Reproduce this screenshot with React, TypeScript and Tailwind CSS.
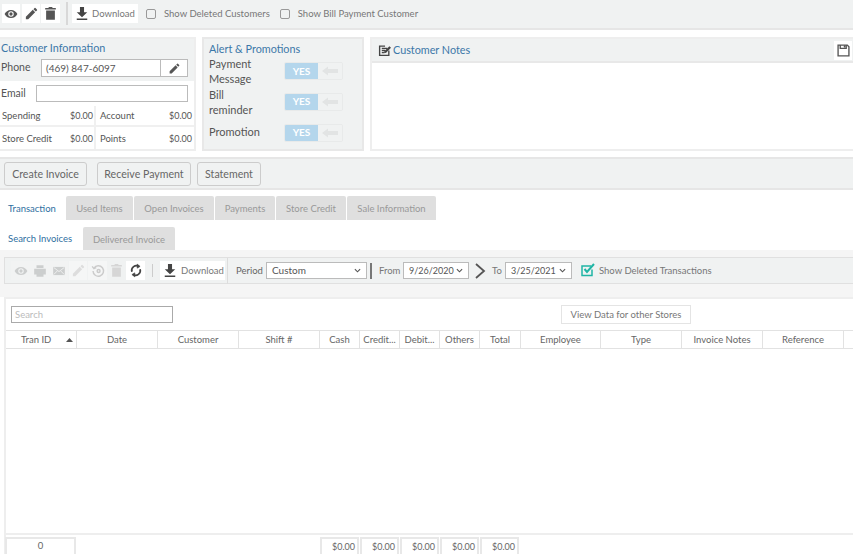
import React from "react";

const font = { fontFamily: 'Lato, "Open Sans", sans-serif' };

const Eye = ({ c = "#555" }: { c?: string }) => (
  <svg width="14" height="14" viewBox="0 0 24 24" fill={c}><path d="M12 5C7 5 2.700 8.100 1 12c1.700 3.900 6 7 11 7s9.300-3.100 11-7c-1.700-3.900-6-7-11-7zm0 11.700a4.700 4.700 0 1 1 0-9.400 4.700 4.700 0 0 1 0 9.400zm0-7.500a2.800 2.800 0 1 0 0 5.600 2.800 2.800 0 0 0 0-5.600z" /></svg>
);
const Pencil = ({ c = "#555", s = 15 }: { c?: string; s?: number }) => (
  <svg width={s} height={s} viewBox="0 0 24 24" fill={c}><path d="M3 17.250V21h3.750L17.800 9.940l-3.750-3.750L3 17.250zM20.700 7.040a1 1 0 0 0 0-1.410l-2.340-2.340a1 1 0 0 0-1.410 0l-1.830 1.830 3.750 3.750 1.830-1.830z" /></svg>
);
const Trash = ({ c = "#555" }: { c?: string }) => (
  <svg width="15" height="15" viewBox="0 0 24 24" fill={c}><path d="M5 7h14v15H5zM3.500 3H9V1.500h6V3h5.500v2.500h-17z" /></svg>
);
const Download = ({ c = "#444" }: { c?: string }) => (
  <svg width="14" height="15" viewBox="0 0 24 24" fill={c}><path d="M8.500 1h7v9h5.500l-9 8.500L3 10h5.500zM3 20.500h18V23H3z" /></svg>
);
const Arrow = () => (
  <svg width="16" height="10" viewBox="0 0 16 10" fill="#e2e4e4"><path d="M0 5l6-4.500V3h10v4H6v2.500z" /></svg>
);

const Toggle = () => (
  <div className="flex h-[18px] w-[59px] rounded-[2px] border border-[#e8eaea] overflow-hidden">
    <div className="w-[33px] bg-[#b4d6ec] text-white text-[10px] font-bold flex items-center justify-center">YES</div>
    <div className="flex-1 bg-[#f0f2f2] flex items-center justify-center"><Arrow /></div>
  </div>
);

const Stat = ({ a, b, c, d, border }: { a: string; b: string; c: string; d: string; border?: boolean }) => (
  <div className={`flex h-[22px] items-center text-[9.500px] text-[#555] ${border ? "border-b-2 border-[#f0f0f0]" : ""}`}>
    <div className="w-[96px] h-full flex items-center justify-between pl-[2px] pr-[1px] pt-[1px] border-r-2 border-[#f0f0f0]"><span>{a}</span><span className="text-[9px]">{b}</span></div>
    <div className="flex-1 flex items-center justify-between pl-[4px] pr-[2px] pt-[1px]"><span>{c}</span><span className="text-[9px]">{d}</span></div>
  </div>
);

const Tab = ({ t, w }: { t: string; w: string }) => (
  <div className={`${w} h-full bg-[#dfdfdf] rounded-t-[2px] flex items-center justify-center pt-[3px] text-[9.500px] text-[#999]`}>{t}</div>
);

const cols: [string, string][] = [
  ["Date", "w-[81px]"], ["Customer", "w-[81px]"], ["Shift #", "w-[81px]"], ["Cash", "w-[40px]"], ["Credit...", "w-[40px]"],
  ["Debit...", "w-[40px]"], ["Others", "w-[40px]"], ["Total", "w-[41px]"], ["Employee", "w-[80px]"], ["Type", "w-[81px]"],
  ["Invoice Notes", "w-[81px]"], ["Reference", "w-[81px]"],
];

const Money = ({ w }: { w: string }) => (
  <div className={`${w} h-[17px] border-2 border-b-0 border-[#e8e8e8] flex items-center justify-end pr-[2px] text-[9px] text-[#666]`}>$0.00</div>
);

const Select = ({ v, w, s }: { v: string; w: string; s: string }) => (
  <div className={`${w} ${s} h-[17px] bg-white border border-[#bbb] flex items-center justify-between pl-[5px] pr-[5px] text-[#555]`}>
    <span>{v}</span>
    <svg width="7" height="5" viewBox="0 0 8 5" fill="none" stroke="#555" strokeWidth="1.300"><path d="M1 1l3 3 3-3" /></svg>
  </div>
);

export default function App() {
  return (
    <div style={font} className="w-[853px] h-[554px] overflow-hidden bg-white text-[#555] flex flex-col">
      {/* top bar */}
      <div className="h-[30px] shrink-0 bg-[#f0f2f2] border-b-2 border-[#e6e6e6] flex items-center pl-[2px] pb-[1px]">
        <div className="w-[18px] h-[19px] bg-white flex items-center justify-center"><Eye /></div>
        <div className="w-[18px] h-[19px] bg-white ml-[2px] flex items-center justify-center"><Pencil /></div>
        <div className="w-[19px] h-[19px] bg-white ml-[1px] flex items-center justify-center"><Trash /></div>
        <div className="w-[2px] h-[23px] bg-[#d8d8d8] ml-[6px]" />
        <div className="w-[66px] h-[19px] bg-white ml-[4px] flex items-center pl-[3px] gap-[3px] text-[9.500px] text-[#777]"><Download /><span className="pt-[2px]">Download</span></div>
        <div className="w-[10px] h-[10px] rounded-[2px] border border-[#999] ml-[8px]" />
        <span className="text-[9.500px] text-[#777] ml-[8px] pt-[2px]">Show Deleted Customers</span>
        <div className="w-[10px] h-[10px] rounded-[2px] border border-[#999] ml-[10px]" />
        <span className="text-[9.500px] text-[#777] ml-[8px] pt-[2px]">Show Bill Payment Customer</span>
      </div>

      {/* panels */}
      <div className="h-[114px] shrink-0 mt-[7px] flex">
        <div className="w-[196px] h-[114px] border-2 border-l-0 border-[#eeeeee] flex flex-col">
          <div className="h-[43px] bg-[#f0f2f2] pl-[1px]">
            <div className="text-[10.800px] leading-[15px] pt-[1px] h-[17px] text-[#3b77a8]">Customer Information</div>
            <div className="flex items-center mt-[3px]">
              <span className="text-[10.500px] w-[40px]">Phone</span>
              <div className="w-[147px] h-[18px] bg-white border border-[#bbb] flex items-center text-[10px] pl-[4px]">
                <span className="flex-1">(469) 847-6097</span>
                <div className="w-[27px] h-full border-l border-[#bbb] flex items-center justify-center"><Pencil s={13} /></div>
              </div>
            </div>
          </div>
          <div className="h-[25px] flex items-center pl-[1px]">
            <span className="text-[10.500px] w-[35px]">Email</span>
            <div className="w-[152px] h-[17px] border border-[#bbb]" />
          </div>
          <Stat a="Spending" b="$0.00" c="Account" d="$0.00" border />
          <Stat a="Store Credit" b="$0.00" c="Points" d="$0.00" />
        </div>

        <div className="w-[162px] h-[114px] ml-[6px] bg-[#f0f2f2] border-2 border-[#e8e8e8] pl-[5px] pt-[2px] relative">
          <div className="text-[10.800px] leading-[16px] text-[#3b77a8]">Alert &amp; Promotions</div>
          <div className="flex items-center h-[30px] mt-[-1px]">
            <div className="w-[75px] text-[11px] leading-[15px]">Payment<br />Message</div><Toggle />
          </div>
          <div className="flex items-center h-[31px]">
            <div className="w-[75px] text-[11px] leading-[15px]">Bill<br />reminder</div><Toggle />
          </div>
          <div className="flex items-center h-[31px]">
            <div className="w-[75px] text-[11px]">Promotion</div><Toggle />
          </div>
        </div>

        <div className="flex-1 ml-[6px] h-[114px] border-2 border-r-0 border-[#eeeeee]">
          <div className="h-[24px] bg-[#f0f2f2] border-b-2 border-[#e8e8e8] flex items-center pl-[6px]">
            <svg width="13" height="13" viewBox="0 0 24 24" fill="none"><path d="M20 12v9H3V4h10" stroke="#444" strokeWidth="2.500" /><path d="M7 8h10M7 12h6M7 16h4" stroke="#444" strokeWidth="2.500" /><path d="M11 17l1-4L21 4l3 3-9 9z" fill="#444" /></svg>
            <span className="text-[10.800px] text-[#3b77a8] ml-[2px] flex-1">Customer Notes</span>
            <div className="w-[18px] h-[19px] bg-white flex items-center justify-center mr-[1px]">
              <svg width="13" height="13" viewBox="0 0 24 24" fill="none" stroke="#555" strokeWidth="2.500"><path d="M2 2h17l3 3v17H2z" /><path d="M6 2v6h11V2" /><path d="M13 3h2v3h-2z" fill="#555" strokeWidth="1" /></svg>
            </div>
          </div>
        </div>
      </div>

      {/* action bar */}
      <div className="h-[33px] shrink-0 mt-[6px] bg-[#f0f2f2] border-y-2 border-[#e6e6e6] flex items-center pl-[4px] gap-[10px]">
        <div className="w-[83px] h-[24px] rounded-[3px] border border-[#ccc] flex items-center justify-center pt-[2px] text-[10.600px] text-[#666]">Create Invoice</div>
        <div className="w-[94px] h-[24px] rounded-[3px] border border-[#ccc] flex items-center justify-center pt-[2px] text-[10.600px] text-[#666]">Receive Payment</div>
        <div className="w-[64px] h-[24px] ml-[-4px] rounded-[3px] border border-[#ccc] flex items-center justify-center pt-[2px] text-[10.600px] text-[#666]">Statement</div>
      </div>

      {/* tabs */}
      <div className="h-[24px] shrink-0 mt-[6px] flex gap-[1px]">
        <div className="w-[65px] h-full flex items-center pl-[8px] pt-[3px] text-[9.500px] text-[#2f6f9f]">Transaction</div>
        <Tab t="Used Items" w="w-[67px]" />
        <Tab t="Open Invoices" w="w-[80px]" />
        <Tab t="Payments" w="w-[60px]" />
        <Tab t="Store Credit" w="w-[70px]" />
        <Tab t="Sale Information" w="w-[89px]" />
      </div>
      <div className="h-[23px] shrink-0 mt-[7px] flex">
        <div className="w-[83px] h-full flex items-center pl-[8px] pt-[2px] text-[9.500px] text-[#2f6f9f]">Search Invoices</div>
        <Tab t="Delivered Invoice" w="w-[92px]" />
      </div>

      {/* transaction toolbar */}
      <div className="h-[47px] shrink-0 bg-[#f5f5f5] pt-[7px] pl-[4px]">
        <div className="h-[27px] bg-[#f0f2f2] border border-[#e0e0e0] border-r-0 flex items-center text-[9.500px]">
          <div className="w-[57px] h-[19px] ml-[6px] bg-[#f5f6f6] flex items-center justify-around opacity-40">
            <Eye c="#999" />
            <svg width="14" height="14" viewBox="0 0 24 24" fill="#999"><path d="M6 2h12v5H6zM2 8h20v10h-4v4H6v-4H2z" /></svg>
            <svg width="14" height="14" viewBox="0 0 24 24"><path d="M2 5h20v14H2z" fill="#999" /><path d="M3 6l9 7 9-7M3 18l6-6M21 18l-6-6" fill="none" stroke="#f5f6f6" strokeWidth="1.500" /></svg>
          </div>
          <div className="w-[18px] h-[19px] ml-[1px] bg-[#f5f6f6] flex items-center justify-center"><Pencil c="#ddd" /></div>
          <div className="w-[19px] h-[19px] ml-[1px] bg-[#f5f6f6] flex items-center justify-center">
            <svg width="14" height="14" viewBox="0 0 24 24" fill="none" stroke="#ccc" strokeWidth="2.500"><path d="M5 7a9 9 0 1 1-1.500 5" /><path d="M2 4l3 4 4-2" /><circle cx="13" cy="12" r="2.500" /></svg>
          </div>
          <div className="w-[19px] h-[19px] flex items-center justify-center"><Trash c="#d6d6d6" /></div>
          <div className="w-[19px] h-[19px] bg-white flex items-center justify-center">
            <svg width="14" height="15" viewBox="0 0 24 24" fill="none" stroke="#444" strokeWidth="3"><path d="M5 14a8 8 0 0 1 12-9" /><path d="M19 10a8 8 0 0 1-12 9" /><path d="M14 1l5 4-5 3z" fill="#444" strokeWidth="1" /><path d="M10 23l-5-4 5-3z" fill="#444" strokeWidth="1" /></svg>
          </div>
          <div className="w-px h-[13px] bg-[#ccc] ml-[7px]" />
          <div className="w-[65px] h-[19px] bg-white ml-[7px] flex items-center pl-[3px] gap-[4px] text-[#777]"><Download /><span className="pt-[1px]">Download</span></div>
          <div className="w-px h-[26px] bg-[#ddd] ml-[2px]" />
          <span className="ml-[8px] w-[30px] text-[#666] pt-[1px]">Period</span>
          <Select v="Custom" w="w-[101px]" s="text-[10px]" />
          <div className="w-[2px] h-[16px] bg-[#777] ml-[3px]" />
          <span className="ml-[7px] w-[24px] text-[#777] pt-[1px]">From</span>
          <Select v="9/26/2020" w="w-[66px]" s="text-[9px]" />
          <svg className="ml-[6px]" width="11" height="16" viewBox="0 0 11 16" fill="none" stroke="#555" strokeWidth="1.800"><path d="M1 1l8 7-8 7" /></svg>
          <span className="ml-[6px] w-[13px] text-[#777] pt-[1px]">To</span>
          <Select v="3/25/2021" w="w-[67px]" s="text-[9px]" />
          <svg className="ml-[9px] mb-[2px]" width="15" height="14" viewBox="0 0 15 14" fill="none" stroke="#1fb5a5" strokeWidth="1.500"><path d="M11 6.500V12.500H1V3h9" /><path d="M3.500 6l2.500 3 7-8" strokeWidth="2" /></svg>
          <span className="ml-[3px] text-[#777] pt-[1px]">Show Deleted Transactions</span>
        </div>
      </div>

      {/* data panel */}
      <div className="flex-1 min-h-0 ml-[4px] border-l-2 border-t-2 border-[#eeeeee] flex flex-col">
        <div className="h-[31px] shrink-0 flex items-center pl-[5px]">
          <div className="w-[162px] h-[17px] border border-[#aaa] pl-[3px] text-[9.500px] leading-[15px] text-[#bbb]">Search</div>
          <div className="w-[130px] h-[19px] ml-[388px] border border-[#e4e4e4] flex items-center justify-center pt-[1px] text-[9.500px] text-[#777]">View Data for other Stores</div>
        </div>
        <div className="h-[19px] shrink-0 flex border-y border-[#e2e2e2] text-[9.500px] text-[#666]">
          <div className="w-[71px] border-r border-[#e2e2e2] flex items-center justify-between pl-[15px] pr-[3px]">
            <span className="pt-[1px]">Tran ID</span>
            <svg width="7" height="4" viewBox="0 0 7 4" fill="#555"><path d="M0 4l3.500-4 3.500 4z" /></svg>
          </div>
          {cols.map(([t, w]) => (
            <div key={t} className={`${w} shrink-0 border-r border-[#e2e2e2] flex items-center justify-center pt-[1px] whitespace-nowrap overflow-hidden`}>{t}</div>
          ))}
        </div>
        <div className="flex-1 min-h-0 border-b-2 border-[#eeeeee]" />
        <div className="h-[19px] shrink-0 flex items-end">
          <div className="w-[71px] h-[17px] ml-[-1px] border-2 border-b-0 border-[#e8e8e8] flex items-center justify-center text-[9.500px] text-[#666]">0</div>
          <div className="w-[244px]" />
          <div className="flex gap-[1px]">
            <Money w="w-[39px]" /><Money w="w-[39px]" /><Money w="w-[39px]" /><Money w="w-[39px]" /><Money w="w-[39px]" />
          </div>
        </div>
      </div>
    </div>
  );
}
